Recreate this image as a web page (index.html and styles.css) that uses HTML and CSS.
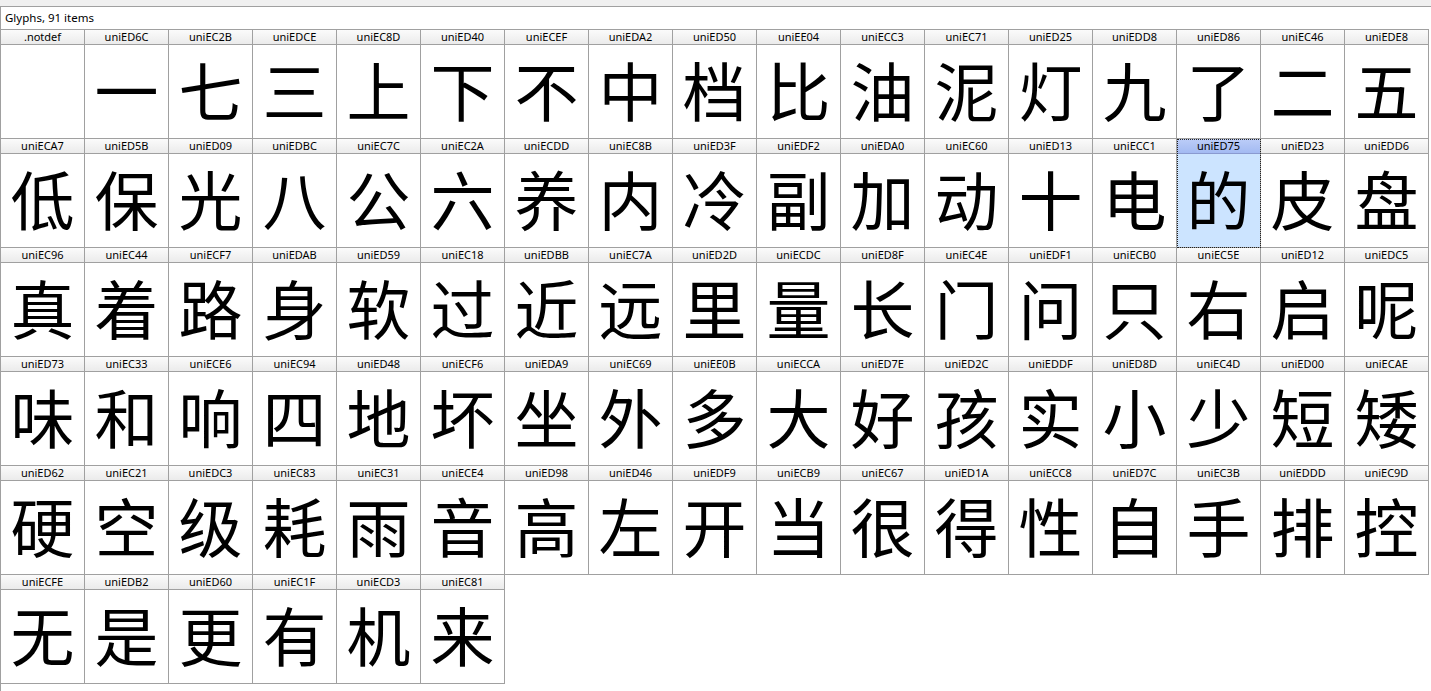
FILE: index.html
```html
<!DOCTYPE html>
<html>
<head>
<meta charset="utf-8">
<link rel="stylesheet" href="styles.css">
</head>
<body>
<div class="topbar"></div>
<div class="panel">
  <div class="title">Glyphs, 91 items</div>
  <div class="grid">
    <div class="cell"><div class="name">.notdef</div><div class="glyph"></div></div>
    <div class="cell"><div class="name">uniED6C</div><div class="glyph">一</div></div>
    <div class="cell"><div class="name">uniEC2B</div><div class="glyph">七</div></div>
    <div class="cell"><div class="name">uniEDCE</div><div class="glyph">三</div></div>
    <div class="cell"><div class="name">uniEC8D</div><div class="glyph">上</div></div>
    <div class="cell"><div class="name">uniED40</div><div class="glyph">下</div></div>
    <div class="cell"><div class="name">uniECEF</div><div class="glyph">不</div></div>
    <div class="cell"><div class="name">uniEDA2</div><div class="glyph">中</div></div>
    <div class="cell"><div class="name">uniED50</div><div class="glyph">档</div></div>
    <div class="cell"><div class="name">uniEE04</div><div class="glyph">比</div></div>
    <div class="cell"><div class="name">uniECC3</div><div class="glyph">油</div></div>
    <div class="cell"><div class="name">uniEC71</div><div class="glyph">泥</div></div>
    <div class="cell"><div class="name">uniED25</div><div class="glyph">灯</div></div>
    <div class="cell"><div class="name">uniEDD8</div><div class="glyph">九</div></div>
    <div class="cell"><div class="name">uniED86</div><div class="glyph">了</div></div>
    <div class="cell"><div class="name">uniEC46</div><div class="glyph">二</div></div>
    <div class="cell"><div class="name">uniEDE8</div><div class="glyph">五</div></div>

    <div class="cell"><div class="name">uniECA7</div><div class="glyph">低</div></div>
    <div class="cell"><div class="name">uniED5B</div><div class="glyph">保</div></div>
    <div class="cell"><div class="name">uniED09</div><div class="glyph">光</div></div>
    <div class="cell"><div class="name">uniEDBC</div><div class="glyph">八</div></div>
    <div class="cell"><div class="name">uniEC7C</div><div class="glyph">公</div></div>
    <div class="cell"><div class="name">uniEC2A</div><div class="glyph">六</div></div>
    <div class="cell"><div class="name">uniECDD</div><div class="glyph">养</div></div>
    <div class="cell"><div class="name">uniEC8B</div><div class="glyph">内</div></div>
    <div class="cell"><div class="name">uniED3F</div><div class="glyph">冷</div></div>
    <div class="cell"><div class="name">uniEDF2</div><div class="glyph">副</div></div>
    <div class="cell"><div class="name">uniEDA0</div><div class="glyph">加</div></div>
    <div class="cell"><div class="name">uniEC60</div><div class="glyph">动</div></div>
    <div class="cell"><div class="name">uniED13</div><div class="glyph">十</div></div>
    <div class="cell"><div class="name">uniECC1</div><div class="glyph">电</div></div>
    <div class="cell sel"><div class="name">uniED75</div><div class="glyph">的</div></div>
    <div class="cell"><div class="name">uniED23</div><div class="glyph">皮</div></div>
    <div class="cell"><div class="name">uniEDD6</div><div class="glyph">盘</div></div>

    <div class="cell"><div class="name">uniEC96</div><div class="glyph">真</div></div>
    <div class="cell"><div class="name">uniEC44</div><div class="glyph">着</div></div>
    <div class="cell"><div class="name">uniECF7</div><div class="glyph">路</div></div>
    <div class="cell"><div class="name">uniEDAB</div><div class="glyph">身</div></div>
    <div class="cell"><div class="name">uniED59</div><div class="glyph">软</div></div>
    <div class="cell"><div class="name">uniEC18</div><div class="glyph">过</div></div>
    <div class="cell"><div class="name">uniEDBB</div><div class="glyph">近</div></div>
    <div class="cell"><div class="name">uniEC7A</div><div class="glyph">远</div></div>
    <div class="cell"><div class="name">uniED2D</div><div class="glyph">里</div></div>
    <div class="cell"><div class="name">uniECDC</div><div class="glyph">量</div></div>
    <div class="cell"><div class="name">uniED8F</div><div class="glyph">长</div></div>
    <div class="cell"><div class="name">uniEC4E</div><div class="glyph">门</div></div>
    <div class="cell"><div class="name">uniEDF1</div><div class="glyph">问</div></div>
    <div class="cell"><div class="name">uniECB0</div><div class="glyph">只</div></div>
    <div class="cell"><div class="name">uniEC5E</div><div class="glyph">右</div></div>
    <div class="cell"><div class="name">uniED12</div><div class="glyph">启</div></div>
    <div class="cell"><div class="name">uniEDC5</div><div class="glyph">呢</div></div>

    <div class="cell"><div class="name">uniED73</div><div class="glyph">味</div></div>
    <div class="cell"><div class="name">uniEC33</div><div class="glyph">和</div></div>
    <div class="cell"><div class="name">uniECE6</div><div class="glyph">响</div></div>
    <div class="cell"><div class="name">uniEC94</div><div class="glyph">四</div></div>
    <div class="cell"><div class="name">uniED48</div><div class="glyph">地</div></div>
    <div class="cell"><div class="name">uniECF6</div><div class="glyph">坏</div></div>
    <div class="cell"><div class="name">uniEDA9</div><div class="glyph">坐</div></div>
    <div class="cell"><div class="name">uniEC69</div><div class="glyph">外</div></div>
    <div class="cell"><div class="name">uniEE0B</div><div class="glyph">多</div></div>
    <div class="cell"><div class="name">uniECCA</div><div class="glyph">大</div></div>
    <div class="cell"><div class="name">uniED7E</div><div class="glyph">好</div></div>
    <div class="cell"><div class="name">uniED2C</div><div class="glyph">孩</div></div>
    <div class="cell"><div class="name">uniEDDF</div><div class="glyph">实</div></div>
    <div class="cell"><div class="name">uniED8D</div><div class="glyph">小</div></div>
    <div class="cell"><div class="name">uniEC4D</div><div class="glyph">少</div></div>
    <div class="cell"><div class="name">uniED00</div><div class="glyph">短</div></div>
    <div class="cell"><div class="name">uniECAE</div><div class="glyph">矮</div></div>

    <div class="cell"><div class="name">uniED62</div><div class="glyph">硬</div></div>
    <div class="cell"><div class="name">uniEC21</div><div class="glyph">空</div></div>
    <div class="cell"><div class="name">uniEDC3</div><div class="glyph">级</div></div>
    <div class="cell"><div class="name">uniEC83</div><div class="glyph">耗</div></div>
    <div class="cell"><div class="name">uniEC31</div><div class="glyph">雨</div></div>
    <div class="cell"><div class="name">uniECE4</div><div class="glyph">音</div></div>
    <div class="cell"><div class="name">uniED98</div><div class="glyph">高</div></div>
    <div class="cell"><div class="name">uniED46</div><div class="glyph">左</div></div>
    <div class="cell"><div class="name">uniEDF9</div><div class="glyph">开</div></div>
    <div class="cell"><div class="name">uniECB9</div><div class="glyph">当</div></div>
    <div class="cell"><div class="name">uniEC67</div><div class="glyph">很</div></div>
    <div class="cell"><div class="name">uniED1A</div><div class="glyph">得</div></div>
    <div class="cell"><div class="name">uniECC8</div><div class="glyph">性</div></div>
    <div class="cell"><div class="name">uniED7C</div><div class="glyph">自</div></div>
    <div class="cell"><div class="name">uniEC3B</div><div class="glyph">手</div></div>
    <div class="cell"><div class="name">uniEDDD</div><div class="glyph">排</div></div>
    <div class="cell"><div class="name">uniEC9D</div><div class="glyph">控</div></div>

    <div class="cell"><div class="name">uniECFE</div><div class="glyph">无</div></div>
    <div class="cell"><div class="name">uniEDB2</div><div class="glyph">是</div></div>
    <div class="cell"><div class="name">uniED60</div><div class="glyph">更</div></div>
    <div class="cell"><div class="name">uniEC1F</div><div class="glyph">有</div></div>
    <div class="cell"><div class="name">uniECD3</div><div class="glyph">机</div></div>
    <div class="cell"><div class="name">uniEC81</div><div class="glyph">来</div></div>
  </div>
</div>
</body>
</html>
```
FILE: styles.css
```css
html, body {
  margin: 0;
  padding: 0;
  background: #ffffff;
  overflow: hidden;
}
body {
  width: 1431px;
  height: 691px;
  font-family: "Noto Sans", "Liberation Sans", sans-serif;
}
.topbar {
  height: 6px;
  background: #f0f0f0;
  border-bottom: 1px solid #a0a0a0;
}
.panel {
  border-left: 1px solid #a0a0a0;
  height: 684px;
  box-sizing: border-box;
}
.title {
  height: 22px;
  line-height: 22px;
  padding-left: 4px;
  font-size: 11.5px;
  color: #000;
}
.grid {
  display: grid;
  grid-template-columns: repeat(17, 84px);
  width: 1428px;
  border-top: 1px solid #a0a0a0;
  align-items: start;
}
.cell {
  border-right: 1px solid #a0a0a0;
  border-bottom: 1px solid #a0a0a0;
  display: flex;
  flex-direction: column;
  background: #ffffff;
}
.name {
  height: 14px;
  line-height: 14px;
  font-size: 11px;
  text-align: center;
  color: #000;
  background: linear-gradient(#fbfbfb, #ebebeb);
  border-bottom: 1px solid #a0a0a0;
  white-space: nowrap;
}
.glyph {
  height: 93px;
  display: flex;
  align-items: center;
  justify-content: center;
  padding-bottom: 8px;
  box-sizing: border-box;
  font-family: "Noto Sans CJK SC", sans-serif;
  font-size: 64px;
  line-height: 1;
  color: #000;
}
.cell.sel {
  outline: 1px dotted #222;
  outline-offset: -1px;
}
.cell.sel .name {
  background: linear-gradient(#bccdf8, #a3baf2);
  border-bottom-color: #8a9ad0;
}
.cell.sel .glyph {
  background: #cce4ff;
}
```
